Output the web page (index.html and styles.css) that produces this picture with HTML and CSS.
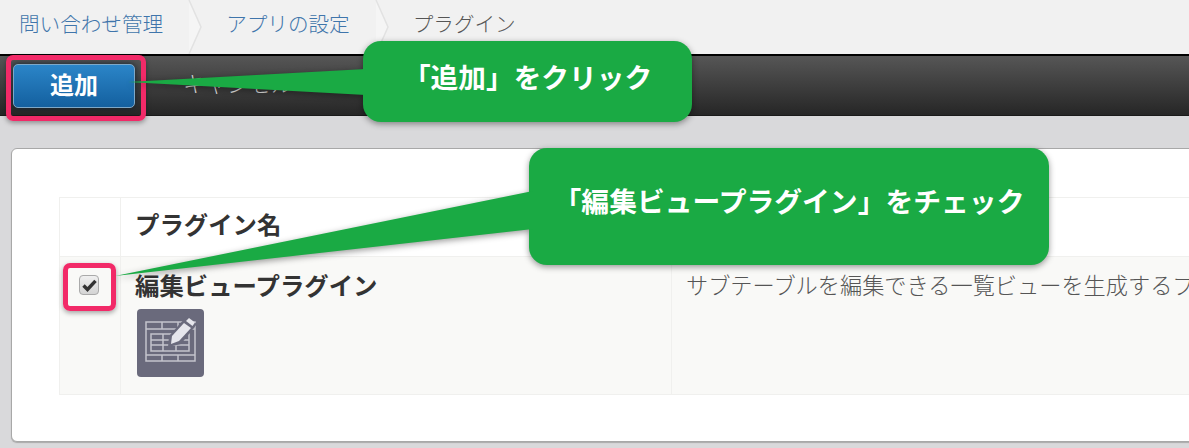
FILE: index.html
```html
<!DOCTYPE html>
<html lang="ja">
<head>
<meta charset="utf-8">
<title>プラグイン</title>
<link rel="stylesheet" href="styles.css">
</head>
<body>
<nav class="crumbs">
  <a class="crumb crumb-first">問い合わせ管理</a>
  <svg class="chev" width="22" height="54" viewBox="0 0 22 54"><path d="M2 0 L14 27 L2 54" fill="#f5f5f5" stroke="#e2e2e2" stroke-width="1.5"/></svg>
  <a class="crumb crumb-second">アプリの設定</a>
  <svg class="chev" width="22" height="54" viewBox="0 0 22 54"><path d="M2 0 L14 27 L2 54" fill="#f5f5f5" stroke="#e2e2e2" stroke-width="1.5"/></svg>
  <span class="crumb crumb-current">プラグイン</span>
</nav>
<div class="toolbar">
  <button class="btn-add">追加</button>
  <a class="btn-cancel">キャンセル</a>
</div>
<main class="card">
  <table class="plugins">
    <thead>
      <tr><th class="col-check"></th><th class="col-name">プラグイン名</th><th class="col-desc"></th></tr>
    </thead>
    <tbody>
      <tr>
        <td class="col-check">
          <span class="check">
            <svg width="15" height="13" viewBox="0 0 15 13"><path d="M1.5 6.5 L5.5 10.5 L13.5 1.8" fill="none" stroke="#333" stroke-width="3.4"/></svg>
          </span>
        </td>
        <td class="col-name">
          <div class="plugin-name">編集ビュープラグイン</div>
          <svg class="plugin-icon" width="67" height="68" viewBox="0 0 67 68">
            <rect x="0" y="0" width="67" height="68" rx="4" fill="#6a6a7c"/>
            <g fill="none" stroke="#c4c4cc" stroke-width="1.5">
              <rect x="9" y="13" width="49" height="39"/>
              <path d="M9 20 H58 M9 46 H58 M25 13 V20 M41 13 V20 M25 46 V52 M41 46 V52"/>
              <rect x="14" y="25" width="38" height="17"/>
              <path d="M14 31 H52 M14 36 H52 M26 25 V42 M39 25 V42"/>
            </g>
            <path d="M32 27 L49 8 L60 15 L44 35 L31 38 Z" fill="#6a6a7c"/>
            <path d="M35 27 L47 14 L54 19 L42 32 L34 35 Z" fill="#e6e6ec"/>
            <path d="M49 12 L52 9 L58 13.5 L55.5 17 Z" fill="#e6e6ec"/>
          </svg>
        </td>
        <td class="col-desc">サブテーブルを編集できる一覧ビューを生成するプラグイン</td>
      </tr>
    </tbody>
  </table>
</main>

<div class="mark mark-add"></div>
<div class="mark mark-check"></div>

<div class="callout callout-add">
  <svg class="tail tail-add" width="240" height="30" viewBox="0 0 240 30"><path d="M0 15 L238 2 V28 Z" fill="#1aaa44"/></svg>
  「追加」をクリック
</div>
<div class="callout callout-check">
  <svg class="tail tail-check" width="420" height="90" viewBox="0 0 420 90"><path d="M0 87 L418 2 V40 Z" fill="#1aaa44"/></svg>
  「編集ビュープラグイン」をチェック
</div>
</body>
</html>
```
FILE: styles.css
```css
* { box-sizing: border-box; }
html, body { margin: 0; height: 448px; overflow: hidden; }
body {
  position: relative;
  background: #d9d9db;
  font-family: "Noto Sans CJK JP", "Open Sans", sans-serif;
  color: #333;
}
.crumbs {
  display: flex;
  align-items: center;
  height: 54px;
  background: #f1f1f1;
  font-size: 20.6px;
  font-weight: 300;
}
.crumb { white-space: nowrap; padding-bottom: 9px; }
.crumb-first { margin-left: 19px; color: #3f75ab; }
.crumb-second { margin-left: 17px; color: #3f75ab; }
.crumb-current { margin-left: 17px; color: #555; }
.chev { margin-left: 24px; flex: none; }
.crumb-second + .chev { margin-left: 24px; }
.toolbar {
  display: flex;
  align-items: center;
  height: 62px;
  padding: 0 0 0 13px;
  border-top: 2px solid #000;
  border-bottom: 1px solid #1a1a1a;
  background: linear-gradient(#565656, #262626);
}
.btn-add {
  width: 122px;
  height: 44px;
  padding: 0 0 5px;
  border: 1px solid #7ea8c8;
  border-radius: 5px;
  background: linear-gradient(#2b85c8, #14609f);
  box-shadow: 0 0 6px #10202e;
  color: #fff;
  font: bold 24px "Noto Sans CJK JP", sans-serif;
}
.btn-cancel {
  margin-left: 48px;
  padding-bottom: 8px;
  color: #ddd;
  font-size: 22px;
  font-weight: 300;
}
.card {
  width: 1300px;
  height: 294px;
  margin: 32px 0 0 11px;
  padding: 48px 47px;
  background: #fff;
  border: 1px solid #a8a8a8;
  border-radius: 6px;
  box-shadow: 0 1px 1px #aaa;
}
.plugins {
  width: 1240px;
  border-collapse: collapse;
  table-layout: fixed;
}
.plugins th, .plugins td {
  border: 1px solid #f0f0ee;
  padding: 0;
  vertical-align: top;
  text-align: left;
}
.plugins th { height: 59px; background: #fff; }
.plugins td { height: 138px; background: #f9f9f7; }
.col-check { width: 61px; }
.col-name { width: 551px; }
.plugins th.col-name {
  padding: 10px 0 0 14px;
  font-size: 24.4px;
  font-weight: bold;
  line-height: 32px;
}
.plugins td.col-name { padding: 12px 0 0 14px; }
.plugins td.col-desc {
  padding: 10px 0 0 14px;
  font-size: 22.2px;
  font-weight: 300;
  line-height: 34px;
  color: #555;
  white-space: nowrap;
}
.plugins td.col-check { padding: 18px 0 0 19px; }
.check {
  display: flex;
  align-items: center;
  justify-content: center;
  width: 20px;
  height: 20px;
  border: 1px solid #aaa;
  border-radius: 4px;
  background: linear-gradient(#f0f0f0, #d4d4d4);
}
.plugin-name {
  font-size: 24.4px;
  font-weight: bold;
  line-height: 32px;
}
.plugin-icon {
  display: block;
  margin: 8px 0 0 2px;
  filter: blur(0.6px);
}
.mark {
  position: absolute;
  border: 5px solid #f22a68;
  border-radius: 7px;
  box-shadow: 0 2px 5px rgba(0, 0, 0, .35);
}
.mark-add { left: 6px; top: 55px; width: 140px; height: 66px; }
.mark-check { left: 63px; top: 263px; width: 53px; height: 48px; }
.callout {
  position: absolute;
  display: flex;
  justify-content: center;
  background: #1aaa44;
  border-radius: 18px;
  color: #fff;
  font-weight: bold;
  white-space: nowrap;
  filter: drop-shadow(0 2px 3px rgba(0, 0, 0, .4));
}
.callout-add {
  left: 363px; top: 41px; width: 329px; height: 81px;
  padding-top: 15px;
  font-size: 27.7px;
  line-height: 40px;
}
.callout-check {
  left: 529px; top: 148px; width: 520px; height: 117px;
  padding-top: 31px;
  font-size: 27.8px;
  line-height: 42px;
}
.tail { position: absolute; }
.tail-add { left: -235px; top: 26px; }
.tail-check { left: -414px; top: 41px; }
```
